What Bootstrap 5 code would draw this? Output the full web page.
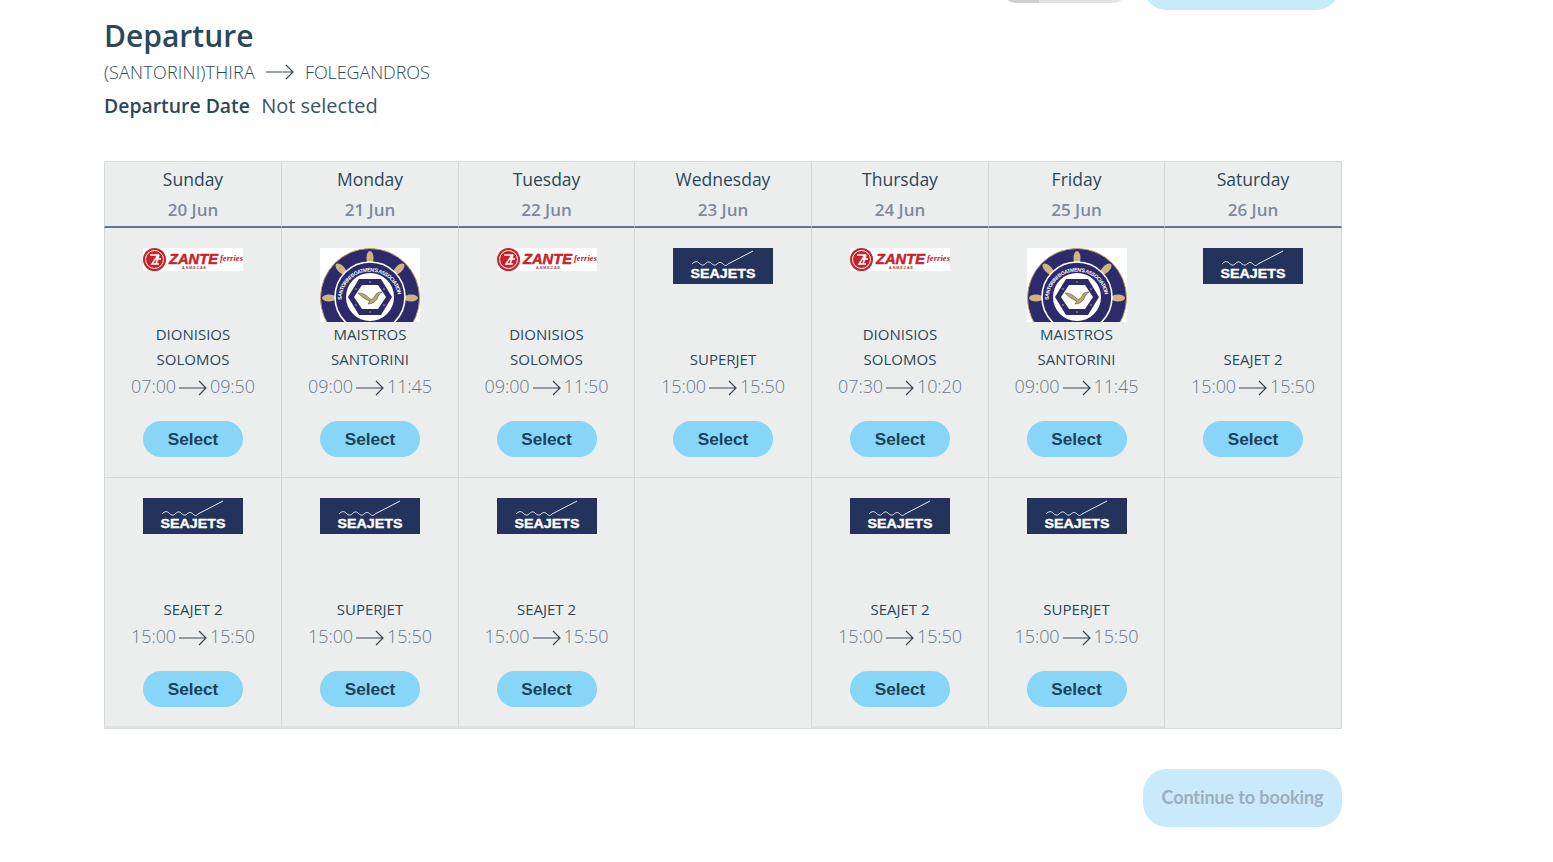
<!DOCTYPE html>
<html lang="en">
<head>
<meta charset="utf-8">
<title>Departure</title>
<link href="https://cdn.jsdelivr.net/npm/bootstrap@5.3.0/dist/css/bootstrap.min.css" rel="stylesheet">
<style>
html,body{overflow:hidden;height:862px}
body{font-family:"Open Sans",sans-serif;color:#2b4859;background:#fff}
.page-wrap{margin-left:104px;width:1238px}
.clip-bar{height:10px;overflow:hidden;padding-right:2px}
.pill-gray{width:125px;height:40px;margin-top:-37px;background:linear-gradient(90deg,#cfcfcf 30%,#e2e2e2 30%);border-radius:14px}
.pill-blue{width:197px;height:58px;margin-top:-48px;background:#c9eafb;border-radius:24px}
.dep-title{font-size:30px;font-weight:600;line-height:42px;margin:5px 0 0;color:#2b4859}
.route-line{font-size:18px;font-weight:350;line-height:28px;margin-top:1px;letter-spacing:-.1px;color:#2b4859}
.route-from{letter-spacing:.2px}
.route-arrow{margin:0 11px}
.date-line{font-size:20px;line-height:28px;margin-top:6px;font-weight:400;color:#3b5565}
.date-line b{font-size:19.4px;font-weight:600;color:#2b4859;margin-right:6px}
.cal{margin-top:41px;display:grid;grid-template-columns:177px 177px 176px 177px 177px 176px 1fr;background:#eceeee;border-top:1px solid #d6d9d9;border-bottom:1px solid #d6d9d9}
.hd-cell{height:66px;text-align:center;border-left:1px solid #d6d9d9;border-bottom:2px solid #64778a;padding-top:4px}
.day-name{font-size:17.5px;line-height:27px;color:#2b4859}
.day-date{font-size:17px;line-height:33px;font-weight:600;color:#7d8aa0}
.edge-right{border-right:1px solid #d6d9d9}
.trip-cell{height:250px;padding-top:20px;text-align:center;border-left:1px solid #d6d9d9;border-bottom:1px solid #d6d9d9}
.trip-cell.last-row{border-bottom:2px solid #dfe2e2}
.trip-cell.blank{border-bottom:0}
.logo-box{height:74px;width:100px;margin:0 auto;overflow:hidden}
.logo-box svg{display:block}
.ship-name{height:50px;display:flex;flex-direction:column;justify-content:flex-end;font-size:15px;line-height:25px;color:#2b4859}
.ship-name span{display:block}
.time-row{font-size:18px;font-weight:350;line-height:28px;color:#6a7a8b;white-space:nowrap;letter-spacing:-.1px}
.time-row svg{margin:0 3px;vertical-align:-3px}
.sel-btn{display:block;width:100px;height:36px;margin:21px auto 0;padding:0;border:0;border-radius:18px;background:#87d5f7;font-family:"Liberation Sans",Arial,sans-serif;font-weight:700;font-size:17.2px;line-height:34px;color:#1c4257}
.foot-row{margin-top:40px}
.go-btn{width:199px;height:58px;padding:0 0 2px;border:0;border-radius:24px;background:#c9eafb;font-family:Lato,sans-serif;font-weight:700;font-size:18px;color:#9ab0bf;letter-spacing:-.1px}
.svg-defs{position:absolute}
</style>
</head>
<body>
<svg width="0" height="0" class="svg-defs" aria-hidden="true">
  <defs>
    <symbol id="arrow" viewBox="0 0 28 16"><path d="M0 8H27M20 1l7 7-7 7" fill="none" stroke="#3a4652" stroke-width="1.2"/></symbol>
    <symbol id="zante" viewBox="0 0 100 23">
      <rect width="100" height="23" fill="#fff"/>
      <circle cx="11.5" cy="11.5" r="11.5" fill="#c8212a"/>
      <circle cx="11.5" cy="11.5" r="9" fill="none" stroke="#fff" stroke-width="1"/>
      <path d="M7 7h8l-6 9h7M13 11h5M16 7l-3 9" fill="none" stroke="#fff" stroke-width="1.5"/>
      <text x="26" y="16" font-family="Liberation Sans,sans-serif" font-weight="700" font-style="italic" font-size="15" textLength="49" lengthAdjust="spacingAndGlyphs" fill="#c8212a" stroke="#c8212a" stroke-width=".5">ZANTE</text>
      <text x="77" y="13" font-family="Liberation Serif,serif" font-weight="700" font-style="italic" font-size="8" textLength="23" lengthAdjust="spacingAndGlyphs" fill="#c8212a">ferries</text>
      <text x="39" y="20.500" font-family="Liberation Sans,sans-serif" font-weight="700" font-size="4" textLength="25" lengthAdjust="spacingAndGlyphs" fill="#a43a40">A.N.M.E.Z.A.E.</text>
    </symbol>
    <symbol id="seajets" viewBox="0 0 100 36">
      <rect width="100" height="36" fill="#23335c"/>
      <path d="M19 16c3-3 5-3 7-1s4 3 6 1 4-3 6-1 4 3 6 1 4-2 6 0 3 2 5 0L80 3" fill="none" stroke="#e6ebf5" stroke-width="1"/>
      <text x="50" y="30" text-anchor="middle" font-family="Liberation Sans,sans-serif" font-weight="700" font-size="13" textLength="65" lengthAdjust="spacingAndGlyphs" fill="#fff" stroke="#fff" stroke-width=".35">SEAJETS</text>
    </symbol>
    <symbol id="wheel" viewBox="0 0 100 74">
      <rect width="100" height="74" fill="#fff"/>
      <circle cx="50" cy="50" r="49.500" fill="#2c2a6b" stroke="#b9a36c" stroke-width="1"/>
      <g fill="#cdb582">
        <ellipse cx="50" cy="10" rx="3.500" ry="7"/>
        <ellipse cx="9" cy="50" rx="7" ry="3.500"/><ellipse cx="91" cy="50" rx="7" ry="3.500"/>
        <ellipse cx="21" cy="21" rx="3.500" ry="7" transform="rotate(-45 21 21)"/><ellipse cx="79" cy="21" rx="3.500" ry="7" transform="rotate(45 79 21)"/>
        <rect x="49" y="15" width="2" height="12"/>
      </g>
      <circle cx="50" cy="49" r="35" fill="#2c2a6b" stroke="#fff" stroke-width="1.600"/>
      <path id="ringArc" d="M21.500 52a28.500 28.500 0 0 1 57 0" fill="none"/>
      <text font-family="Liberation Sans,sans-serif" font-weight="700" font-size="5.200" fill="#fff"><textPath href="#ringArc" textLength="84">SANTORINI BOATMEN'S ASSOCIATION</textPath></text>
      <circle cx="50" cy="49" r="24" fill="#fff"/>
      <path d="M39 31h22l11 18-11 18H39L28 49z" fill="#2c2a6b"/>
      <path d="M42 37h16l8 12-8 12H42l-8-12z" fill="#fff"/>
      <path d="M38 45c5 0 9 2 12 6 2 1 4-1 6-5 1-1 3-2 6-2-3 2-4 4-5 7-2 3-5 5-9 5l2-3c-4-1-8-4-12-8z" fill="#b5a868" stroke="#3b3a3a" stroke-width=".5"/>
      <g fill="#cdb582"><circle cx="50" cy="34" r=".8"/><circle cx="50" cy="64" r=".8"/><circle cx="64" cy="41" r=".8"/><circle cx="36" cy="41" r=".8"/><circle cx="64" cy="57" r=".8"/><circle cx="36" cy="57" r=".8"/></g>
    </symbol>
  </defs>
</svg>

<main class="page-wrap">
  <div class="clip-bar d-flex justify-content-end align-items-start gap-3">
    <div class="pill-gray"></div>
    <div class="pill-blue"></div>
  </div>

  <h1 class="dep-title">Departure</h1>
  <div class="route-line d-flex align-items-center">
    <span class="route-from">(SANTORINI)THIRA</span>
    <svg class="route-arrow" width="28" height="16"><use href="#arrow"/></svg>
    <span>FOLEGANDROS</span>
  </div>
  <div class="date-line"><b>Departure Date</b> Not selected</div>

  <section class="cal">
    <div class="hd-cell"><div class="day-name">Sunday</div><div class="day-date">20 Jun</div></div>
    <div class="hd-cell"><div class="day-name">Monday</div><div class="day-date">21 Jun</div></div>
    <div class="hd-cell"><div class="day-name">Tuesday</div><div class="day-date">22 Jun</div></div>
    <div class="hd-cell"><div class="day-name">Wednesday</div><div class="day-date">23 Jun</div></div>
    <div class="hd-cell"><div class="day-name">Thursday</div><div class="day-date">24 Jun</div></div>
    <div class="hd-cell"><div class="day-name">Friday</div><div class="day-date">25 Jun</div></div>
    <div class="hd-cell edge-right"><div class="day-name">Saturday</div><div class="day-date">26 Jun</div></div>

    <div class="trip-cell"><div class="logo-box"><svg width="100" height="23"><use href="#zante"/></svg></div><div class="ship-name"><span>DIONISIOS</span><span>SOLOMOS</span></div><div class="time-row">07:00<svg width="28" height="16"><use href="#arrow"/></svg>09:50</div><button class="sel-btn" type="button">Select</button></div>
    <div class="trip-cell"><div class="logo-box"><svg width="100" height="74"><use href="#wheel"/></svg></div><div class="ship-name"><span>MAISTROS</span><span>SANTORINI</span></div><div class="time-row">09:00<svg width="28" height="16"><use href="#arrow"/></svg>11:45</div><button class="sel-btn" type="button">Select</button></div>
    <div class="trip-cell"><div class="logo-box"><svg width="100" height="23"><use href="#zante"/></svg></div><div class="ship-name"><span>DIONISIOS</span><span>SOLOMOS</span></div><div class="time-row">09:00<svg width="28" height="16"><use href="#arrow"/></svg>11:50</div><button class="sel-btn" type="button">Select</button></div>
    <div class="trip-cell"><div class="logo-box"><svg width="100" height="36"><use href="#seajets"/></svg></div><div class="ship-name"><span>SUPERJET</span></div><div class="time-row">15:00<svg width="28" height="16"><use href="#arrow"/></svg>15:50</div><button class="sel-btn" type="button">Select</button></div>
    <div class="trip-cell"><div class="logo-box"><svg width="100" height="23"><use href="#zante"/></svg></div><div class="ship-name"><span>DIONISIOS</span><span>SOLOMOS</span></div><div class="time-row">07:30<svg width="28" height="16"><use href="#arrow"/></svg>10:20</div><button class="sel-btn" type="button">Select</button></div>
    <div class="trip-cell"><div class="logo-box"><svg width="100" height="74"><use href="#wheel"/></svg></div><div class="ship-name"><span>MAISTROS</span><span>SANTORINI</span></div><div class="time-row">09:00<svg width="28" height="16"><use href="#arrow"/></svg>11:45</div><button class="sel-btn" type="button">Select</button></div>
    <div class="trip-cell edge-right"><div class="logo-box"><svg width="100" height="36"><use href="#seajets"/></svg></div><div class="ship-name"><span>SEAJET 2</span></div><div class="time-row">15:00<svg width="28" height="16"><use href="#arrow"/></svg>15:50</div><button class="sel-btn" type="button">Select</button></div>

    <div class="trip-cell last-row"><div class="logo-box"><svg width="100" height="36"><use href="#seajets"/></svg></div><div class="ship-name"><span>SEAJET 2</span></div><div class="time-row">15:00<svg width="28" height="16"><use href="#arrow"/></svg>15:50</div><button class="sel-btn" type="button">Select</button></div>
    <div class="trip-cell last-row"><div class="logo-box"><svg width="100" height="36"><use href="#seajets"/></svg></div><div class="ship-name"><span>SUPERJET</span></div><div class="time-row">15:00<svg width="28" height="16"><use href="#arrow"/></svg>15:50</div><button class="sel-btn" type="button">Select</button></div>
    <div class="trip-cell last-row"><div class="logo-box"><svg width="100" height="36"><use href="#seajets"/></svg></div><div class="ship-name"><span>SEAJET 2</span></div><div class="time-row">15:00<svg width="28" height="16"><use href="#arrow"/></svg>15:50</div><button class="sel-btn" type="button">Select</button></div>
    <div class="trip-cell blank"></div>
    <div class="trip-cell last-row"><div class="logo-box"><svg width="100" height="36"><use href="#seajets"/></svg></div><div class="ship-name"><span>SEAJET 2</span></div><div class="time-row">15:00<svg width="28" height="16"><use href="#arrow"/></svg>15:50</div><button class="sel-btn" type="button">Select</button></div>
    <div class="trip-cell last-row"><div class="logo-box"><svg width="100" height="36"><use href="#seajets"/></svg></div><div class="ship-name"><span>SUPERJET</span></div><div class="time-row">15:00<svg width="28" height="16"><use href="#arrow"/></svg>15:50</div><button class="sel-btn" type="button">Select</button></div>
    <div class="trip-cell blank edge-right"></div>
  </section>

  <div class="foot-row d-flex justify-content-end">
    <button class="go-btn" type="button">Continue to booking</button>
  </div>
</main>
<script src="https://cdn.jsdelivr.net/npm/bootstrap@5.3.0/dist/js/bootstrap.bundle.min.js"></script>
</body>
</html>
